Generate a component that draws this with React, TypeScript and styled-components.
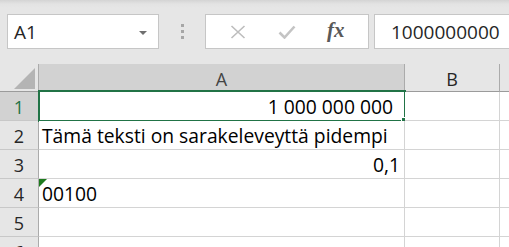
import styled, { createGlobalStyle } from 'styled-components';

const GlobalStyle = createGlobalStyle`
  html, body {
    margin: 0;
    padding: 0;
    background: #ffffff;
    overflow: hidden;
  }
`;

const rows = [
  { n: 1, text: '1 000 000 000', align: 'right', selected: true, padded: true },
  { n: 2, text: 'Tämä teksti on sarakeleveyttä pidempi', align: 'left' },
  { n: 3, text: '0,1', align: 'right' },
  { n: 4, text: '00100', align: 'left', flagged: true },
  { n: 5, text: '', align: 'left' },
  { n: 6, text: '', align: 'left' },
];

export default function App() {
  return (
    <Page>
      <GlobalStyle />
      <FormulaBar>
        <NameBox>
          <NameText>A1</NameText>
          <DropArrow />
        </NameBox>
        <Grip>
          <GripDot />
          <GripDot />
          <GripDot />
        </Grip>
        <ButtonBox>
          <IconSlot>
            <svg width="16" height="14" viewBox="0 0 16 14">
              <path d="M1.5 1 L14.5 13 M14.5 1 L1.5 13" stroke="#bdbdbd" strokeWidth="1.6" fill="none" />
            </svg>
          </IconSlot>
          <IconSlot>
            <svg width="18" height="14" viewBox="0 0 18 14">
              <path d="M1.5 7.5 L6.5 12.5 L16.5 1.5" stroke="#c4c4c4" strokeWidth="2.6" fill="none" />
            </svg>
          </IconSlot>
          <FxText>fx</FxText>
        </ButtonBox>
        <FormulaInput>1000000000</FormulaInput>
      </FormulaBar>

      <Sheet>
        <Corner>
          <svg width="22" height="21" viewBox="0 0 22 21">
            <path d="M21 0 L21 21 L0 21 Z" fill="#b4b4b4" />
          </svg>
        </Corner>
        <ColHeader $selected>A</ColHeader>
        <ColHeader>B</ColHeader>
        <ColHeader $last />

        {rows.map((r) => (
          <RowGroup key={r.n}>
            <RowHeader $selected={r.selected}>{r.n}</RowHeader>
            <Cell $align={r.align} $padded={r.padded}>
              {r.flagged && <ErrorFlag />}
              {r.text}
              {r.selected && (
                <Selection>
                  <FillHandle />
                </Selection>
              )}
            </Cell>
            <Cell />
            <Cell $last />
          </RowGroup>
        ))}
      </Sheet>
    </Page>
  );
}

const Page = styled.div`
  width: 509px;
  height: 247px;
  overflow: hidden;
  background: #ffffff;
`;

const FormulaBar = styled.div`
  height: 64px;
  box-sizing: border-box;
  padding: 14px 0 0 7px;
  display: flex;
  align-items: flex-start;
  background: linear-gradient(#d4d4d4 0px, #e3e3e3 4px, #e6e6e6 8px);
  font-family: 'Open Sans', 'Noto Sans', sans-serif;
`;

const NameBox = styled.div`
  width: 152px;
  height: 35px;
  box-sizing: border-box;
  border: 1px solid #c6c6c6;
  background: #ffffff;
  display: flex;
  align-items: center;
  justify-content: space-between;
  padding: 0 11px 0 6px;
`;

const NameText = styled.span`
  font-size: 19px;
  color: #262626;
`;

const DropArrow = styled.span`
  width: 0;
  height: 0;
  border-left: 4px solid transparent;
  border-right: 4px solid transparent;
  border-top: 4px solid #6f6f6f;
  margin-top: 2px;
`;

const Grip = styled.div`
  width: 46px;
  height: 35px;
  display: flex;
  flex-direction: column;
  align-items: center;
  justify-content: center;
  gap: 3px;
`;

const GripDot = styled.span`
  width: 3px;
  height: 3px;
  background: #a6a6a6;
`;

const ButtonBox = styled.div`
  width: 164px;
  height: 35px;
  box-sizing: border-box;
  border: 1px solid #c6c6c6;
  background: #ffffff;
  display: flex;
  align-items: center;
  justify-content: space-around;
  padding: 0 8px 0 8px;
`;

const IconSlot = styled.span`
  display: flex;
  align-items: center;
  justify-content: center;
  width: 30px;
`;

const FxText = styled.span`
  font-family: 'Liberation Serif', serif;
  font-style: italic;
  font-weight: bold;
  font-size: 21px;
  color: #595959;
  width: 30px;
  text-align: center;
  margin-top: -2px;
`;

const FormulaInput = styled.div`
  margin-left: 5px;
  flex: 1;
  height: 35px;
  box-sizing: border-box;
  border: 1px solid #c6c6c6;
  border-right: none;
  background: #ffffff;
  display: flex;
  align-items: center;
  padding-left: 16px;
  font-size: 19px;
  color: #262626;
`;

const Sheet = styled.div`
  display: grid;
  grid-template-columns: 39px 366px 95px 1fr;
  grid-template-rows: 28px;
  grid-auto-rows: 29px;
  font-family: 'Open Sans', 'Noto Sans', sans-serif;
  font-size: 19.3px;
  color: #000000;
  background: #e6e6e6;
`;

const RowGroup = styled.div`
  display: contents;
`;

const Corner = styled.div`
  background: #e6e6e6;
  border-right: 1px solid #ababab;
  border-bottom: 1px solid #9b9b9b;
  display: flex;
  align-items: flex-end;
  justify-content: flex-end;
  padding: 0 2px 2px 0;
`;

const ColHeader = styled.div<{ $selected?: boolean; $last?: boolean }>`
  background: ${({ $selected }) => ($selected ? '#d2d2d2' : '#e6e6e6')};
  border-right: ${({ $last }) => ($last ? 'none' : '1px solid #ababab')};
  border-bottom: 1px solid #9b9b9b;
  display: flex;
  align-items: center;
  justify-content: center;
  padding-top: 2px;
  color: ${({ $selected }) => ($selected ? '#444444' : '#262626')};
  font-size: 18px;
`;

const RowHeader = styled.div<{ $selected?: boolean }>`
  background: ${({ $selected }) => ($selected ? '#d2d2d2' : '#e6e6e6')};
  border-right: 1px solid #ababab;
  border-bottom: 1px solid #c8c8c8;
  display: flex;
  align-items: center;
  justify-content: center;
  padding-top: 2px;
  color: ${({ $selected }) => ($selected ? '#217346' : '#262626')};
  font-size: 18px;
`;

const Cell = styled.div<{ $align?: string; $last?: boolean; $padded?: boolean }>`
  position: relative;
  background: #ffffff;
  border-right: ${({ $last }) => ($last ? 'none' : '1px solid #d4d4d4')};
  border-bottom: 1px solid #d4d4d4;
  display: flex;
  align-items: flex-end;
  justify-content: ${({ $align }) => ($align === 'right' ? 'flex-end' : 'flex-start')};
  padding: 0 ${({ $padded }) => ($padded ? '11px' : '4px')} 4px 3px;
  white-space: nowrap;
  line-height: 1;
`;

const ErrorFlag = styled.span`
  position: absolute;
  left: 0;
  top: 0;
  width: 0;
  height: 0;
  border-top: 8px solid #1e7a1e;
  border-right: 8px solid transparent;
`;

const Selection = styled.div`
  position: absolute;
  left: -1px;
  top: -2px;
  right: -2px;
  bottom: -2px;
  border: 2px solid #217346;
  pointer-events: none;
`;

const FillHandle = styled.span`
  position: absolute;
  right: -5px;
  bottom: -5px;
  width: 6px;
  height: 6px;
  background: #217346;
  border: 1px solid #ffffff;
`;
